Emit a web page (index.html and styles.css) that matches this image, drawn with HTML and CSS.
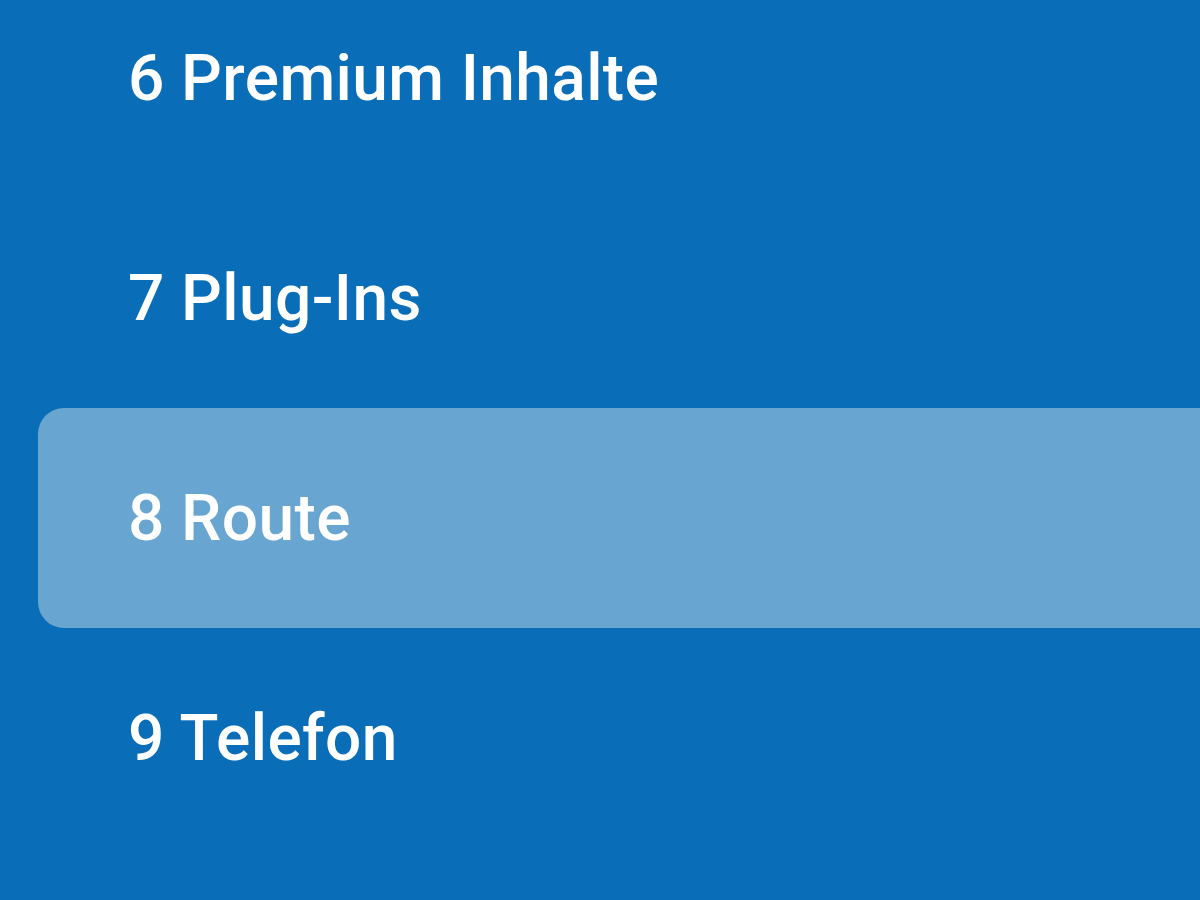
FILE: index.html
```html
<!DOCTYPE html>
<html lang="de">
<head>
<meta charset="utf-8">
<title>Menü</title>
<link rel="stylesheet" href="styles.css">
</head>
<body>
<ul class="menu">
  <li class="item">6 Premium Inhalte</li>
  <li class="item">7 Plug-Ins</li>
  <li class="item selected">8 Route</li>
  <li class="item">9 Telefon</li>
</ul>
</body>
</html>
```
FILE: styles.css
```css
html, body {
  margin: 0;
  padding: 0;
  height: 100%;
  overflow: hidden;
}
body {
  background: #0a6db7;
  font-family: Roboto, "Noto Sans", sans-serif;
  color: #ffffff;
}
.menu {
  list-style: none;
  margin: -32px 0 0 38px;
  padding: 0;
  display: flex;
  flex-direction: column;
}
.item {
  height: 220px;
  display: flex;
  align-items: center;
  padding-left: 90px;
  font-size: 64px;
  font-weight: 500;
  letter-spacing: 0.4px;
}
.selected {
  background: #68a5d1;
  border-radius: 26px 0 0 26px;
}
```
